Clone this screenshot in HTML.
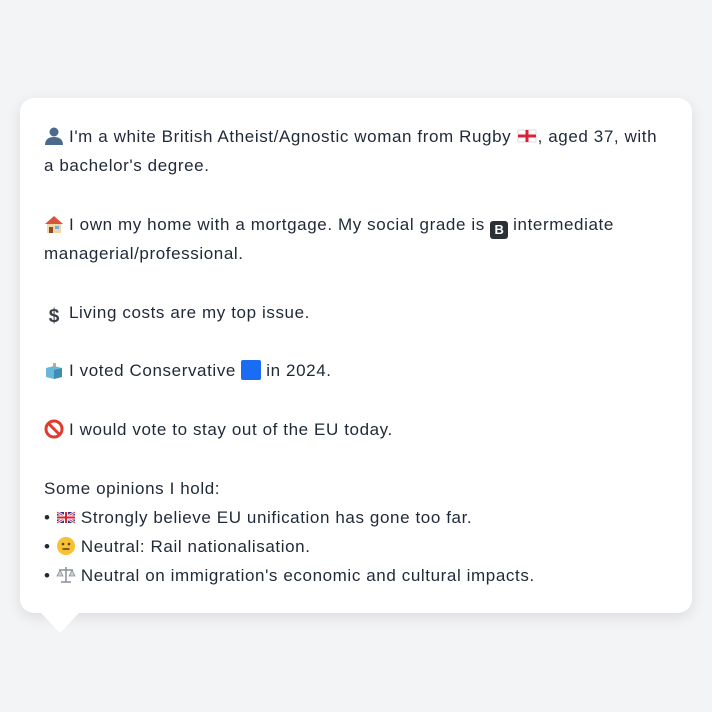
<!DOCTYPE html>
<html><head><meta charset="utf-8"><style>
html,body{margin:0;padding:0;background:#f3f4f6;width:712px;height:712px;overflow:hidden}
.card{position:absolute;left:20px;top:98px;width:672px;height:515px;background:#fff;border-radius:14px;box-shadow:0 4px 14px rgba(0,0,0,.10)}
.tail{position:absolute;left:40px;top:612px;width:0;height:0;border-left:20px solid transparent;border-right:20px solid transparent;border-top:21px solid #fff}
.txt{position:absolute;left:44px;top:122px;font-family:"Liberation Sans",sans-serif;font-size:17px;letter-spacing:0.6px;line-height:29.3px;color:#1f2937;white-space:nowrap}
.e{display:inline-block;width:20px;height:20px;vertical-align:-4px;margin-right:5px;position:relative;letter-spacing:0}
</style></head><body>
<div class="card"></div><div class="tail"></div>
<div class="txt">
<span class="e"><svg width="20" height="20" viewBox="0 0 20 20"><circle cx="10" cy="6" r="4.5" fill="#4b6a8a"/><path d="M1 19c0-6 4-8 9-8s9 2 9 8z" fill="#4b6a8a"/></svg></span>I'm a white British Atheist/Agnostic woman from Rugby <span class="e" style="margin-right:1px"><svg width="20" height="20" viewBox="0 0 20 20"><rect x="1" y="4" width="18" height="12" fill="#fff" stroke="#ddd"/><rect x="8.5" y="4" width="3" height="12" fill="#d8213a"/><rect x="1" y="8.5" width="18" height="3" fill="#d8213a"/></svg></span>, aged 37, with<br>
a bachelor's degree.<br><br>
<span class="e"><svg width="20" height="20" viewBox="0 0 20 20"><path d="M1 10L10 2l9 8z" fill="#d8543a"/><rect x="3" y="10" width="14" height="9" fill="#f1d7a8"/><rect x="5" y="13" width="4" height="6" fill="#8b4a2b"/><rect x="11" y="12" width="4" height="3" fill="#6fb1e0"/></svg></span>I own my home with a mortgage. My social grade is <span class="e" style="width:18px;height:18px;background:#2b2f36;border-radius:3px;color:#fff;font-size:13px;line-height:18px;text-align:center;font-weight:bold">B</span>intermediate<br>
managerial/professional.<br><br>
<span class="e" style="font-weight:bold;font-size:19px;line-height:20px;text-align:center;color:#3a3f47">$</span>Living costs are my top issue.<br><br>
<span class="e"><svg width="20" height="20" viewBox="0 0 20 20"><rect x="9" y="3" width="3" height="5" fill="#f2a04a"/><path d="M2 8l8-2 8 2v9l-8 2-8-2z" fill="#6bb7d9"/><path d="M10 10v9l8-2V8z" fill="#3f8db6"/></svg></span>I voted Conservative <span class="e" style="width:20px;height:20px;background:#1a6df2;border-radius:2px"></span>in 2024.<br><br>
<span class="e"><svg width="20" height="20" viewBox="0 0 20 20"><circle cx="10" cy="10" r="8" fill="none" stroke="#e23b2e" stroke-width="3"/><path d="M4.5 4.5l11 11" stroke="#e23b2e" stroke-width="3"/></svg></span>I would vote to stay out of the EU today.<br><br>
Some opinions I hold:<br>
• <span class="e"><svg width="20" height="20" viewBox="0 0 20 20"><rect x="1" y="5" width="18" height="11" fill="#1f3c8f"/><path d="M1 5l18 11M19 5L1 16" stroke="#fff" stroke-width="2.5"/><path d="M1 5l18 11M19 5L1 16" stroke="#d8213a" stroke-width="1"/><path d="M10 5v11M1 10.5h18" stroke="#fff" stroke-width="4"/><path d="M10 5v11M1 10.5h18" stroke="#d8213a" stroke-width="2"/></svg></span>Strongly believe EU unification has gone too far.<br>
• <span class="e"><svg width="20" height="20" viewBox="0 0 20 20"><circle cx="10" cy="10" r="9" fill="#f7c131"/><circle cx="7" cy="8" r="1.3" fill="#5a3a1a"/><circle cx="13" cy="8" r="1.3" fill="#5a3a1a"/><path d="M6.5 13h7" stroke="#5a3a1a" stroke-width="1.5"/></svg></span>Neutral: Rail nationalisation.<br>
• <span class="e"><svg width="20" height="20" viewBox="0 0 20 20"><path d="M10 2v15M3 5h14M5 17h10" stroke="#8a9099" stroke-width="1.5"/><path d="M1 11l3-6 3 6zM13 11l3-6 3 6z" fill="#c9ced4" stroke="#8a9099" stroke-width=".8"/></svg></span>Neutral on immigration's economic and cultural impacts.
</div>
</body></html>
